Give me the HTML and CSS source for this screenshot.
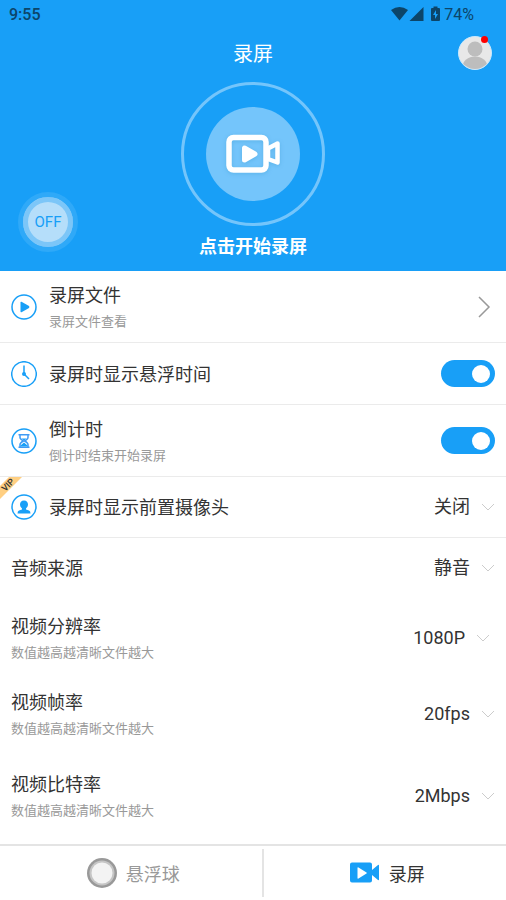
FILE: index.html
```html
<!DOCTYPE html>
<html lang="zh-CN">
<head>
<meta charset="utf-8">
<meta name="viewport" content="width=device-width, initial-scale=1">
<title>录屏</title>
<link rel="stylesheet" href="styles.css">
</head>
<body>
<header class="hero">
  <div class="status">
    <span class="clock">9:55</span>
    <span class="status-right">
      <svg width="50" height="16" viewBox="0 0 50 16" fill="currentColor" aria-hidden="true">
        <path d="M1 4Q9.500-2 18 4L9.500 14.500z"/>
        <path d="M33.500 1V15H19.500z"/>
        <path fill-rule="evenodd" d="M43.500 .500h4V2h1.500q1 0 1 1v11q0 1-1 1h-7q-1 0-1-1V3q0-1 1-1h1.500zM46 4l-3 5h2v4l3-5h-2z"/>
      </svg>
      <span>74%</span>
    </span>
  </div>
  <div class="titlebar">
    <h1>录屏</h1>
    <button class="avatar" aria-label="账户">
      <svg width="34" height="34" viewBox="0 0 34 34" aria-hidden="true">
        <defs><clipPath id="face"><circle cx="17" cy="17" r="16"/></clipPath></defs>
        <circle cx="17" cy="17" r="16.500" fill="#e8e8e8" stroke="#c9e8fd"/>
        <g fill="#bdbdbd" clip-path="url(#face)"><circle cx="17" cy="13" r="7.500"/><ellipse cx="17" cy="31" rx="12.500" ry="10.500"/></g>
      </svg>
      <span class="dot"></span>
    </button>
  </div>
  <button class="record">
    <span class="ring"><span class="disc">
      <svg width="56" height="40" viewBox="0 0 56 40" fill="none" stroke="#fff" stroke-width="5.500" stroke-linejoin="round" aria-hidden="true">
        <rect x="4" y="3.500" width="37" height="32.500" rx="4.500"/>
        <path d="M43 14.500v10.500l9.500 3.500V9.500z" stroke-width="4.500"/>
        <path d="M19.500 14v12L30 20z" fill="#fff" stroke-width="5"/>
      </svg>
    </span></span>
    <span class="record-label">点击开始录屏</span>
  </button>
  <button class="float-toggle">OFF</button>
</header>

<main>
  <a class="row tall lined" href="#files">
    <svg class="icon" viewBox="0 0 26 26" aria-hidden="true"><circle cx="13" cy="13" r="12"/><path class="fill" d="M9.500 8.500v9q0 1 1 .700l7.500-4.300q.800-.900 0-1.800L10.500 7.800q-1-.500-1 .700z"/></svg>
    <span class="text"><span class="name">录屏文件</span><span class="note">录屏文件查看</span></span>
    <svg class="next" width="14" height="22" viewBox="0 0 14 22" aria-hidden="true"><path d="M2 1l10 10L2 21"/></svg>
  </a>
  <div class="row lined">
    <svg class="icon" viewBox="0 0 26 26" aria-hidden="true"><circle cx="13" cy="13" r="12.300"/><path d="M13 4.500V13l5 5"/><circle class="fill" cx="13" cy="13" r="2"/></svg>
    <label class="text" for="time"><span class="name">录屏时显示悬浮时间</span></label>
    <input class="switch" id="time" type="checkbox" checked>
  </div>
  <div class="row tall lined">
    <svg class="icon" viewBox="0 0 26 26" aria-hidden="true"><circle cx="13" cy="13" r="12"/><g class="glass"><path d="M7.500 6.800h11M7.500 19.200h11M9 7v2.500q0 1.500 3.300 3.500Q9 15 9 16.500V19M17 7v2.500q0 1.500-3.300 3.500 3.300 2 3.300 3.500V19"/><path class="fill" d="M10.500 10.500h5L13 12.500zM13 14.500l3.500 3v1h-7v-1z"/></g></svg>
    <label class="text" for="countdown"><span class="name">倒计时</span><span class="note">倒计时结束开始录屏</span></label>
    <input class="switch" id="countdown" type="checkbox" checked>
  </div>
  <div class="row lined camera">
    <svg class="vip" width="22" height="22" viewBox="0 0 22 22" aria-label="VIP"><path d="M9 0h13L0 22V9z" fill="#ffcf82"/><text x="8" y="8" transform="rotate(-45 8 8)" text-anchor="middle" dominant-baseline="central">VIP</text></svg>
    <svg class="icon" viewBox="0 0 26 26" aria-hidden="true"><circle cx="13" cy="13" r="12"/><path class="fill" d="M13 6.500c2.700 0 4 1.700 4 4 0 1.500-.800 3-2 3.900v1l3 1q1.500.600 1.500 3h-13q0-2.400 1.500-3l3-1v-1c-1.200-.900-2-2.400-2-3.900 0-2.300 1.300-4 4-4z"/></svg>
    <label class="text" for="camera"><span class="name">录屏时显示前置摄像头</span></label>
    <select id="camera"><option>关闭</option></select>
    <svg class="down" width="14" height="8" viewBox="0 0 14 8" aria-hidden="true"><path d="M1 1l6 6 6-6"/></svg>
  </div>
  <div class="row">
    <label class="text" for="audio"><span class="name">音频来源</span></label>
    <select id="audio"><option>静音</option></select>
    <svg class="down" width="14" height="8" viewBox="0 0 14 8" aria-hidden="true"><path d="M1 1l6 6 6-6"/></svg>
  </div>
  <div class="quality">
    <div class="row inset">
      <label class="text" for="resolution"><span class="name">视频分辨率</span><span class="note">数值越高越清晰文件越大</span></label>
      <select id="resolution"><option>1080P</option></select>
      <svg class="down" width="14" height="8" viewBox="0 0 14 8" aria-hidden="true"><path d="M1 1l6 6 6-6"/></svg>
    </div>
    <div class="row">
      <label class="text" for="fps"><span class="name">视频帧率</span><span class="note">数值越高越清晰文件越大</span></label>
      <select id="fps"><option>20fps</option></select>
      <svg class="down" width="14" height="8" viewBox="0 0 14 8" aria-hidden="true"><path d="M1 1l6 6 6-6"/></svg>
    </div>
    <div class="row last">
      <label class="text" for="bitrate"><span class="name">视频比特率</span><span class="note">数值越高越清晰文件越大</span></label>
      <select id="bitrate"><option>2Mbps</option></select>
      <svg class="down" width="14" height="8" viewBox="0 0 14 8" aria-hidden="true"><path d="M1 1l6 6 6-6"/></svg>
    </div>
  </div>
</main>

<nav class="tabs">
  <a href="#ball">
    <svg width="30" height="30" viewBox="0 0 30 30" aria-hidden="true"><circle cx="15" cy="15" r="15" fill="#999"/><circle cx="15" cy="15" r="12.500" fill="#c5c5c5"/><circle cx="15" cy="15" r="10.500" fill="#f3f3f3"/></svg>
    <span>悬浮球</span>
  </a>
  <a class="active" href="#record" aria-current="page">
    <svg width="30" height="22" viewBox="0 0 30 22" aria-hidden="true"><path d="M2 .500h18q2 0 2 2V8l6-5q1-.500 1 .500v14q0 1-1 .500l-6-5v5.500q0 2-2 2H2q-2 0-2-2v-16q0-2 2-2z" fill="#189ff7"/><path d="M7.500 6q0-1 1-.500l8 5q.800.500 0 1l-8 5q-1 .500-1-.500z" fill="#fff"/></svg>
    <span>录屏</span>
  </a>
</nav>
</body>
</html>
```
FILE: styles.css
```css
* { box-sizing: border-box; }

body {
  margin: 0;
  min-height: 100vh;
  display: flex;
  flex-direction: column;
  background: #fff;
  color: #333;
  font-family: Roboto, "Noto Sans CJK SC", sans-serif;
  font-size: 18px;
}

button, select { font: inherit; border: 0; padding: 0; background: none; color: inherit; }
a { color: inherit; text-decoration: none; }
svg { display: block; flex: none; }

/* Header */
.hero {
  position: relative;
  display: flex;
  flex-direction: column;
  align-items: center;
  padding-bottom: 10px;
  background: #189ff7;
  color: #fff;
}
.status {
  align-self: stretch;
  display: flex;
  justify-content: space-between;
  align-items: center;
  height: 28px;
  padding: 0 32px 0 9px;
  color: #0c4569;
  font-size: 16px;
}
.clock { font-weight: 500; }
.status-right { display: flex; align-items: center; gap: 4px; }
.titlebar {
  align-self: stretch;
  display: grid;
  grid-template-columns: 1fr auto 1fr;
  align-items: center;
  height: 50px;
  padding: 0 14px;
}
h1 { grid-column: 2; margin: 0; padding-bottom: 2px; font-size: 20px; font-weight: 400; }
.avatar { position: relative; justify-self: end; }
.dot {
  position: absolute;
  top: 0;
  right: 4px;
  width: 7px;
  height: 7px;
  border-radius: 50%;
  background: #f00;
}
.record {
  display: flex;
  flex-direction: column;
  align-items: center;
  gap: 7px;
  margin-top: 4px;
}
.ring, .disc { display: grid; place-items: center; border-radius: 50%; }
.ring { width: 144px; height: 144px; border: 3px solid #74c5fb; }
.disc { width: 94px; height: 94px; background: #74c5fb; }
.disc svg { filter: drop-shadow(0 1px 2px #3899d066); }
.record-label { font-weight: 700; line-height: 28px; }
.float-toggle {
  position: absolute;
  left: 18px;
  bottom: 19px;
  width: 60px;
  height: 60px;
  border: 5px solid #2fa9f8;
  border-radius: 50%;
  background: #b5defa;
  box-shadow: inset 0 0 0 5px #7cc6f8;
  color: #189ff7;
  font-size: 15px;
}

/* Settings list */
.row {
  position: relative;
  display: flex;
  align-items: center;
  min-height: 60px;
  padding: 0 11px;
}
.row.lined { min-height: 62px; border-bottom: 1px solid #ebebeb; }
.row.tall { min-height: 72px; }
.row.camera { min-height: 61px; }
.text { flex: 1; min-width: 0; padding-top: 2px; }
.text > span { display: block; }
.name { line-height: 28px; }
.note { line-height: 24px; font-size: 13px; color: #999; }
.icon {
  width: 26px;
  height: 26px;
  margin-right: 12px;
  fill: none;
  stroke: #189ff7;
  stroke-width: 1.5;
}
.icon .fill { fill: #189ff7; stroke: none; }
.icon .glass { stroke: #3f9bf5; }
.next { margin-right: 4px; fill: none; stroke: #999; stroke-width: 1.5; }
.down { margin-left: 11px; fill: none; stroke: #ccc; pointer-events: none; }
.vip { position: absolute; left: 0; top: 0; }
.vip text { font-size: 9px; font-weight: 500; fill: #333; }
select {
  appearance: none;
  color: #333;
  line-height: 28px;
  text-align-last: right;
}
.switch {
  appearance: none;
  display: flex;
  align-items: center;
  width: 54px;
  height: 27px;
  margin: 0;
  padding: 0 5px;
  border-radius: 14px;
  background: #ccc;
}
.switch::before {
  content: "";
  width: 18px;
  height: 18px;
  border-radius: 50%;
  background: #fff;
}
.switch:checked { justify-content: flex-end; background: #189ff7; }

.quality { display: grid; gap: 20px; padding: 12px 0 20px; }
.quality .row { min-height: 56px; }
.quality .inset { padding-right: 16px; }
.quality .last { margin-top: 6px; }

/* Bottom tabs */
.tabs {
  display: grid;
  grid-template-columns: 15fr 14fr;
  align-items: center;
  height: 56px;
  margin-top: auto;
  border-top: 2px solid #e4e4e4;
}
.tabs a {
  display: flex;
  align-items: center;
  justify-content: center;
  gap: 9px;
  height: 48px;
  padding-left: 5px;
  color: #999;
}
.tabs a + a { border-left: 2px solid #e4e4e4; }
.tabs .active { color: #333; }
```
